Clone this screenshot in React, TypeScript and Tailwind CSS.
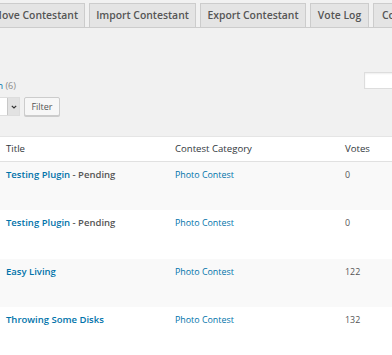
import React from "react";

const font = { fontFamily: '"Open Sans", "Liberation Sans", sans-serif' };

function Tab({ label, cls }: { label: string; cls: string }) {
  return (
    <div
      className={`${cls} h-[24px] shrink-0 border border-b-0 border-[#cccccc] bg-[#e4e4e4] flex items-center text-[10.4px] font-semibold text-[#555555] whitespace-nowrap`}
    >
      {label}
    </div>
  );
}

const rows = [
  { title: "Testing Plugin", status: " - Pending", votes: "0", h: "h-[48px]", bg: "bg-[#f9f9f9]" },
  { title: "Testing Plugin", status: " - Pending", votes: "0", h: "h-[49px]", bg: "bg-white" },
  { title: "Easy Living", status: "", votes: "122", h: "h-[48px]", bg: "bg-[#f9f9f9]" },
  { title: "Throwing Some Disks", status: "", votes: "132", h: "h-[48px]", bg: "bg-white" },
];

export default function App() {
  return (
    <div className="w-[392px] h-[355px] overflow-hidden bg-[#f1f1f1]" style={font}>
      {/* Tabs */}
      <div className="pt-[3px] border-b border-[#cccccc] h-[28px]">
        <div className="flex gap-[4px] -ml-[21px] items-end">
          <Tab label="Move Contestant" cls="w-[106px] justify-end pr-[6px]" />
          <Tab label="Import Contestant" cls="w-[107px] justify-center" />
          <Tab label="Export Contestant" cls="w-[106px] justify-center" />
          <Tab label="Vote Log" cls="w-[59px] justify-center" />
          <Tab label="Contest Settings" cls="w-[110px] justify-start pl-[8px]" />
        </div>
      </div>

      {/* Filters area */}
      <div className="flex items-start mt-[44px]">
        <div className="flex-1 flex flex-col pt-[8px]">
          <div className="h-[12px] leading-[12px] text-[9px] whitespace-nowrap -ml-[20px]">
            <span className="text-[#0073aa]">Open</span>
            <span className="text-[#8a8a8a]"> (6)</span>
          </div>
          <div className="flex items-center gap-[4px] mt-[5px]">
            <div className="w-[60px] -ml-[40px] h-[19px] bg-white border border-[#dddddd] flex justify-end">
              <div className="w-[12px] h-full bg-[#e2e2e2] border-l border-[#c8c8c8] flex items-center justify-center">
                <svg width="6" height="4" viewBox="0 0 6 4">
                  <path d="M0.8 0.8 L3 3 L5.2 0.8" stroke="#333" strokeWidth="1.2" fill="none" />
                </svg>
              </div>
            </div>
            <div className="w-[36px] h-[19px] bg-[#f7f7f7] border border-[#cccccc] rounded-[2px] flex items-center justify-center text-[9px] text-[#555555] shadow-[0_1px_0_#cccccc]">
              Filter
            </div>
          </div>
        </div>
        <div className="w-[40px] h-[17px] -mr-[12px] bg-white border border-[#dddddd] shadow-[inset_0_1px_2px_rgba(0,0,0,0.07)]" />
      </div>

      {/* Table */}
      <div className="mt-[20px] bg-white border-t border-[#e5e5e5]">
        <div className="grid grid-cols-[175px_170px_1fr] h-[25px] items-center border-b border-[#e1e1e1] text-[9.6px] text-[#32373c]">
          <div className="pl-[6px]">Title</div>
          <div>Contest Category</div>
          <div>Votes</div>
        </div>
        {rows.map((r, i) => (
          <div key={i} className={`grid grid-cols-[175px_170px_1fr] ${r.h} ${r.bg} pt-[6px] leading-[14px]`}>
            <div className="pl-[6px] text-[9.5px] font-semibold whitespace-nowrap">
              <span className="text-[#0073aa]">{r.title}</span>
              {r.status && <span className="text-[#555555]">{r.status}</span>}
            </div>
            <div className="text-[8.9px] text-[#0073aa]">Photo Contest</div>
            <div className="text-[8.9px] text-[#555555]">{r.votes}</div>
          </div>
        ))}
      </div>
    </div>
  );
}
